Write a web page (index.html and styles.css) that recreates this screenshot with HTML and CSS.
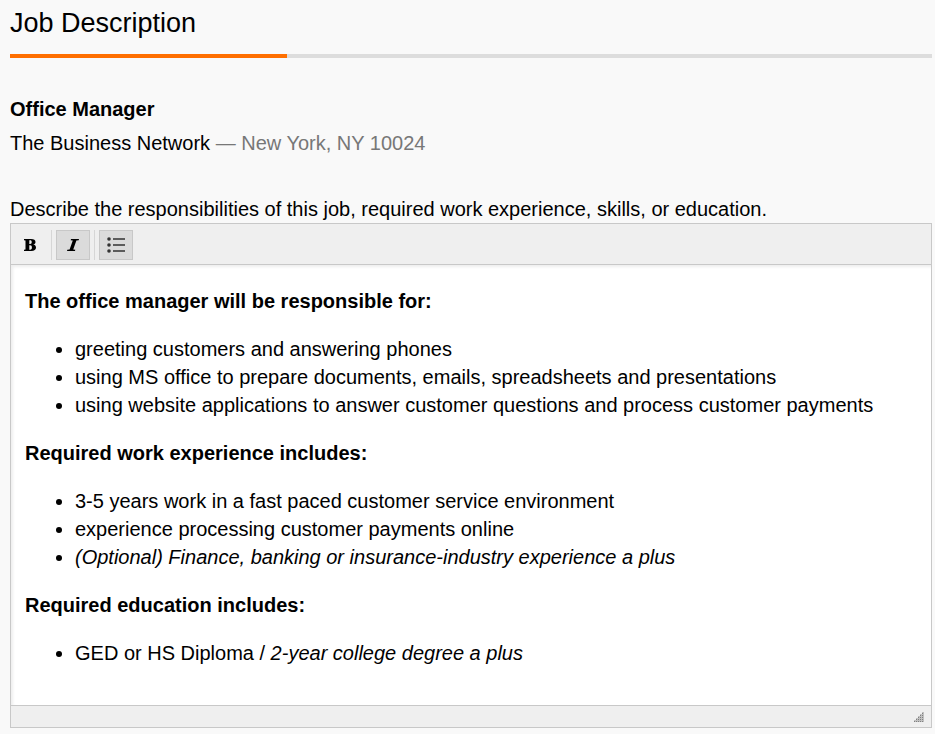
FILE: index.html
```html
<!DOCTYPE html>
<html lang="en">
<head>
<meta charset="utf-8">
<meta name="viewport" content="width=device-width, initial-scale=1">
<title>Job Description</title>
<link rel="stylesheet" href="styles.css">
</head>
<body>
<main class="page">
  <h1 class="page-title">Job Description</h1>
  <div class="progress"><div class="progress-fill"></div></div>
  <section class="job">
    <h2 class="job-title">Office Manager</h2>
    <p class="job-company">The Business Network <span class="job-location">— New York, NY 10024</span></p>
  </section>
  <p class="prompt" id="prompt">Describe the responsibilities of this job, required work experience, skills, or education.</p>
  <div class="editor">
    <div class="toolbar" role="toolbar">
      <button class="tool" type="button" aria-label="Bold">
        <svg class="icon" viewBox="0 0 12 12"><path fill-rule="evenodd" d="M0 0h7c3 0 4.500 1 4.500 2.900 0 1.400-.9 2.300-2.400 2.600C11 5.800 12 6.900 12 8.500 12 10.800 10.300 12 7.300 12H0v-1.200l1.500-.3v-9L0 1.200zM5.300 1.300v3.700h.9c1.200 0 1.500-.7 1.500-1.900s-.4-1.800-1.500-1.800zM5.300 6.300v4.400h.9c1.300 0 1.700-.8 1.700-2.200s-.5-2.200-1.700-2.200z"/></svg>
      </button>
      <span class="divider"></span>
      <button class="tool tool-on" type="button" aria-label="Italic" aria-pressed="true">
        <svg class="icon" viewBox="0 0 12 12"><path d="M4 0h8l-.3 1.200-2.300.2-3.200 9.200 2.100.2L8 12H0l.3-1.200 2.300-.2 3.200-9.200-2.100-.2z"/></svg>
      </button>
      <span class="divider"></span>
      <button class="tool tool-on" type="button" aria-label="Bulleted list" aria-pressed="true">
        <svg class="icon-list" viewBox="0 0 18 16"><path d="M6 1.200h12v1.600H6zM6 7.200h12v1.600H6zM6 13.200h12v1.600H6z"/><circle cx="2" cy="2" r="1.800"/><circle cx="2" cy="8" r="1.800"/><circle cx="2" cy="14" r="1.800"/></svg>
      </button>
    </div>
    <div class="content" contenteditable="true" role="textbox" aria-multiline="true" aria-labelledby="prompt" spellcheck="false">
      <p><strong>The office manager will be responsible for:</strong></p>
      <ul>
        <li>greeting customers and answering phones</li>
        <li>using MS office to prepare documents, emails, spreadsheets and presentations</li>
        <li>using website applications to answer customer questions and process customer payments</li>
      </ul>
      <p><strong>Required work experience includes:</strong></p>
      <ul>
        <li>3-5 years work in a fast paced customer service environment</li>
        <li>experience processing customer payments online</li>
        <li><em>(Optional) Finance, banking or insurance-industry experience a plus</em></li>
      </ul>
      <p><strong>Required education includes:</strong></p>
      <ul>
        <li>GED or HS Diploma / <em>2-year college degree a plus</em></li>
      </ul>
    </div>
    <div class="statusbar">
      <svg class="grip" viewBox="0 0 10 10"><path class="grip-base" d="M8 0h2v10H0V8h2V6h2V4h2V2h2z"/><path d="M8 1h1v1H8zM6 3h1v1H6zM8 3h1v1H8zM4 5h1v1H4zM6 5h1v1H6zM8 5h1v1H8zM2 7h1v1H2zM4 7h1v1H4zM6 7h1v1H6zM8 7h1v1H8zM0 9h1v1H0zM2 9h1v1H2zM4 9h1v1H4zM6 9h1v1H6zM8 9h1v1H8z"/></svg>
    </div>
  </div>
</main>
</body>
</html>
```

FILE: styles.css
```css
* { box-sizing: border-box; }
body {
  margin: 0;
  background: #f9f9f9;
  color: #000;
  font: 20px/28px "Liberation Sans", Arial, sans-serif;
}
h1, h2, p { margin: 0; }
.page { padding: 6px 3px 6px 10px; }
.page-title { font-size: 27px; font-weight: 400; line-height: 34px; }
.progress { height: 4px; margin-top: 14px; background: #ddd; }
.progress-fill { width: 30%; height: 100%; background: #ff6f00; }
.job { margin-top: 34px; line-height: 34px; }
.job-title { font-size: 20px; font-weight: 700; }
.job-location { color: #777; }
.prompt { margin-top: 35px; }
.editor { border: 1px solid #c8c8c8; background: #fff; }
.toolbar {
  display: flex;
  gap: 4px;
  padding: 6px 2px 4px;
  background: #efefef;
  border-bottom: 1px solid #c8c8c8;
}
.tool {
  display: flex;
  align-items: center;
  justify-content: center;
  width: 34px;
  height: 30px;
  padding: 0;
  border: 1px solid transparent;
  background: none;
}
.tool-on { background: #dbdbdb; border-color: #c8c8c8; }
.divider { width: 1px; background: #d6d6d6; }
.icon { width: 12px; height: 12px; fill: #000; }
.icon-list { width: 18px; height: 16px; fill: #333; }
.content {
  padding: 22px 14px 18px;
  outline: none;
  box-shadow: inset 2px 2px 3px #eee;
}
.content ul { margin: 20px 0; padding-left: 50px; }
.statusbar {
  display: flex;
  align-items: center;
  justify-content: flex-end;
  height: 22px;
  padding: 0 7px;
  background: #efefef;
  border-top: 1px solid #c8c8c8;
}
.grip { width: 10px; height: 10px; fill: #808080; }
.grip-base { fill: #c0c0c0; }
```
